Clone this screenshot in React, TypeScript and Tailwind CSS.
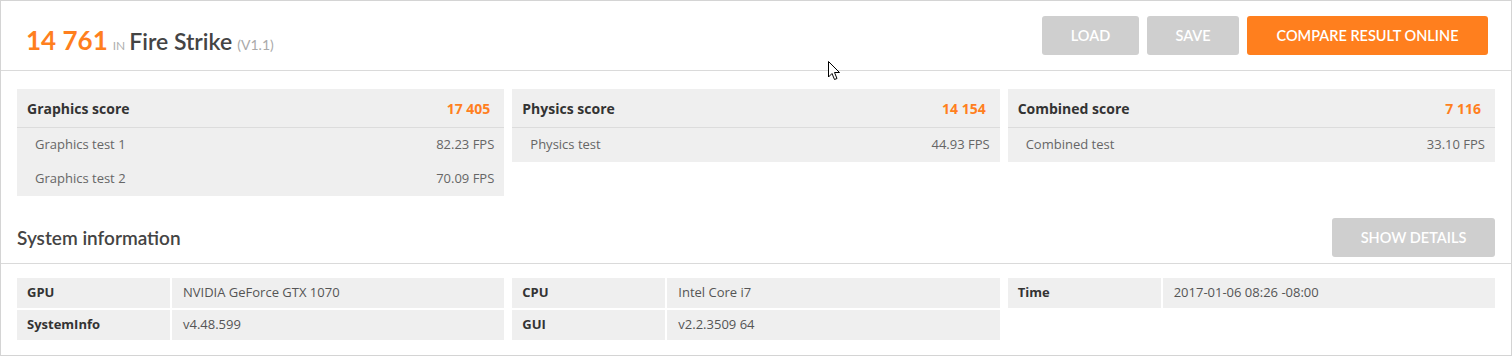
import React from 'react';

const font = { fontFamily: '"Open Sans", "Noto Sans", sans-serif' };
const lato = { fontFamily: 'Lato, "Open Sans", sans-serif' };

const scoreCards = [
  {
    title: 'Graphics score',
    score: '17 405',
    tests: [
      { name: 'Graphics test 1', fps: '82.23 FPS' },
      { name: 'Graphics test 2', fps: '70.09 FPS' },
    ],
  },
  {
    title: 'Physics score',
    score: '14 154',
    tests: [{ name: 'Physics test', fps: '44.93 FPS' }],
  },
  {
    title: 'Combined score',
    score: '7 116',
    tests: [{ name: 'Combined test', fps: '33.10 FPS' }],
  },
];

const infoColumns = [
  [
    { label: 'GPU', value: 'NVIDIA GeForce GTX 1070' },
    { label: 'SystemInfo', value: 'v4.48.599' },
  ],
  [
    { label: 'CPU', value: 'Intel Core i7' },
    { label: 'GUI', value: 'v2.2.3509 64' },
  ],
  [{ label: 'Time', value: '2017-01-06 08:26 -08:00' }],
];

const Cursor = () => (
  <svg className="absolute left-[827px] top-[60px]" width="13" height="20" viewBox="0 0 13 20">
    <path d="M0.5 0.5 L0.5 16 L4 12.5 L6.5 18.5 L9 17.5 L6.5 11.5 L11.5 11.5 Z" fill="#fff" stroke="#000" strokeWidth="1" strokeLinejoin="round" />
  </svg>
);

const App = () => {
  return (
    <div className="w-[1512px] h-[357px] bg-white" style={font}>
      <div className="relative w-[1512px] h-[356px] border border-[#d4d4d4]">
        {/* Header */}
        <div className="h-[70px] px-[23px] flex items-center justify-between border-b border-[#dadada]" style={lato}>
          <div className="flex items-baseline pt-[8px] pl-[2px]">
            <span className="text-[26px] font-bold text-[#ff7f1e] leading-none">14 761</span>
            <span className="text-[12px] text-[#b0b0b0] ml-[5px] mr-[4px] leading-none">IN</span>
            <span className="text-[23px] font-semibold text-[#444] leading-none">Fire Strike</span>
            <span className="text-[14px] text-[#aaa] ml-[5px] leading-none">(V1.1)</span>
          </div>
          <div className="flex gap-2">
            <button className="h-[39px] w-[97px] rounded-[3px] bg-[#cfcfcf] text-white text-[14.5px] font-semibold">LOAD</button>
            <button className="h-[39px] w-[92px] rounded-[3px] bg-[#cfcfcf] text-white text-[14.5px] font-semibold">SAVE</button>
            <button className="h-[39px] w-[241px] rounded-[3px] bg-[#ff7f1e] text-white text-[14.5px] font-semibold">COMPARE RESULT ONLINE</button>
          </div>
        </div>

        {/* Scores */}
        <div className="px-4 pt-[18px] grid grid-cols-3 gap-2 items-start">
          {scoreCards.map((card) => (
            <div key={card.title} className="bg-[#efefef]">
              <div className="h-[39px] pl-[10px] pr-[14px] flex items-center justify-between border-b border-[#dcdcdc]">
                <span className="text-[14px] font-bold text-[#333]">{card.title}</span>
                <span className="text-[14px] font-bold text-[#ff7f1e]">{card.score}</span>
              </div>
              {card.tests.map((t) => (
                <div key={t.name} className="h-[34px] pl-[18px] pr-[10px] flex items-center justify-between text-[13px] text-[#666]">
                  <span>{t.name}</span>
                  <span>{t.fps}</span>
                </div>
              ))}
            </div>
          ))}
        </div>

        {/* System information */}
        <div className="mt-[22px] px-4 pb-[6px] flex items-center justify-between border-b border-[#dadada]" style={lato}>
          <h2 className="text-[19px] font-semibold text-[#444] pt-[2px]">System information</h2>
          <button className="h-[39px] w-[163px] rounded-[3px] bg-[#cfcfcf] text-white text-[14.5px] font-semibold">SHOW DETAILS</button>
        </div>
        <div className="px-4 pt-[14px] grid grid-cols-3 gap-2">
          {infoColumns.map((col, i) => (
            <div key={i} className="flex flex-col gap-[2px]">
              {col.map((row) => (
                <div key={row.label} className="h-[30px] grid grid-cols-[153px_1fr] gap-[2px] text-[13px]">
                  <div className="bg-[#efefef] pl-[10px] flex items-center font-bold text-[#333]">{row.label}</div>
                  <div className="bg-[#efefef] pl-[11px] flex items-center text-[#555]">{row.value}</div>
                </div>
              ))}
            </div>
          ))}
        </div>

        <Cursor />
      </div>
    </div>
  );
};

export default App;
